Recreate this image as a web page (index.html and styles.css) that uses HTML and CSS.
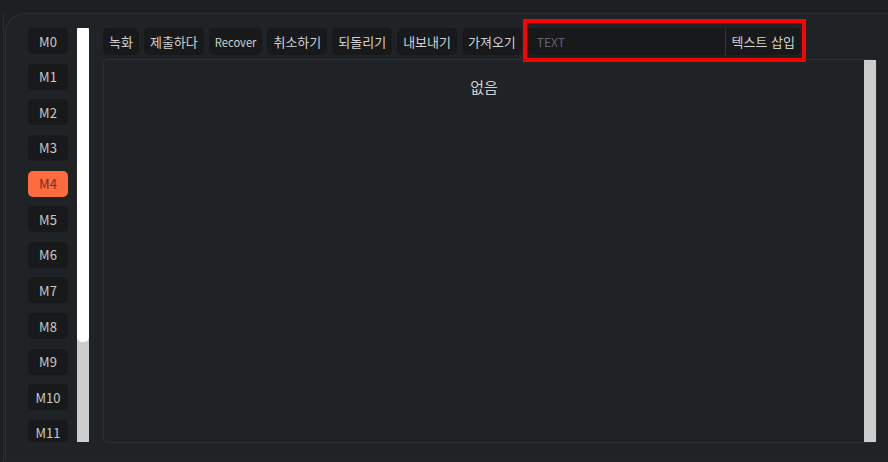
FILE: index.html
```html
<!DOCTYPE html>
<html lang="ko">
<head>
  <meta charset="UTF-8" />
  <meta name="viewport" content="width=device-width, initial-scale=1.0">
  <title>Macro</title>

  <link rel="stylesheet" href="styles.css">
</head>

<body>

  <div class="app">
    <div class="panel">

      <div class="slots">
        <div class="slot-list">
          <button class="slot">M0</button>
          <button class="slot">M1</button>
          <button class="slot">M2</button>
          <button class="slot">M3</button>
          <button class="slot active">M4</button>
          <button class="slot">M5</button>
          <button class="slot">M6</button>
          <button class="slot">M7</button>
          <button class="slot">M8</button>
          <button class="slot">M9</button>
          <button class="slot">M10</button>
          <button class="slot">M11</button>
        </div>
        <!-- scrollbar drawn by hand, the browser hides the real one -->
        <div class="scroll-track">
          <div class="scroll-thumb"></div>
        </div>
      </div>

      <div class="main">
        <div class="toolbar">
          <button class="tool">녹화</button>
          <button class="tool">제출하다</button>
          <button class="tool latin">Recover</button>
          <button class="tool">취소하기</button>
          <button class="tool">되돌리기</button>
          <button class="tool">내보내기</button>
          <button class="tool">가져오기</button>

          <!-- highlighted insert box -->
          <div class="mark">
            <div class="text-group">
              <input type="text" class="text-input" placeholder="TEXT">
              <button class="insert">텍스트 삽입</button>
            </div>
          </div>
        </div>

        <div class="board">
          <div class="board-body">
            <p class="empty">없음</p>
          </div>
          <div class="scroll-track"></div>
        </div>
      </div>

    </div>
  </div>

</body>
</html>
```

FILE: styles.css
```css
body {
  margin: 0;
  padding: 0;
  background-color: #1d2022;
  font-family: "Noto Sans CJK KR", "Noto Sans", sans-serif;
  overflow: hidden;
}

button,
input {
  font-family: inherit;
}

.app {
  height: 462px;
  margin-left: 3px;
  border-left: 1px solid #2a2e30;
}

.panel {
  display: flex;
  height: 448px;
  margin-top: 13px;
  margin-left: 1px;
  padding: 14px 11px 0 22px;
  box-sizing: border-box;
  background-color: #202326;
  border-top: 1px solid #2b2f32;
  border-left: 1px solid #2b2f32;
  border-top-left-radius: 20px;
}

.slots {
  display: flex;
  flex: none;
  height: 414px;
}

.slot-list {
  display: flex;
  flex-direction: column;
  gap: 9.64px;
  width: 49px;
  overflow: hidden;
}

.scroll-track {
  flex: none;
  width: 12px;
  background-color: #cdcdcd;
}

.scroll-thumb {
  height: 314px;
  background-color: #ffffff;
  border-radius: 3px 3px 5px 5px;
}

.slot {
  flex: none;
  width: 40px;
  height: 26px;
  padding: 0;
  border: none;
  border-radius: 5px;
  background-color: #17191b;
  color: #c9c9c9;
  font-size: 13px;
}

.slot.active {
  background-color: #fd6b3e;
  color: #70321f;
}

.main {
  display: flex;
  flex-direction: column;
  gap: 4px;
  flex: 1;
  margin-left: 14px;
}

.toolbar {
  display: flex;
  align-items: flex-start;
  gap: 5px;
  height: 27px;
}

.tool {
  height: 27px;
  padding: 0 6px;
  border: none;
  border-radius: 5px;
  background-color: #17191b;
  color: #d2d2d2;
  font-size: 13px;
  white-space: nowrap;
}

.tool.latin {
  font-size: 11.2px;
}

.mark {
  margin: -9px 0 -7px -4px;
  padding: 5px 1px 3px 0;
  border: 4px solid #ff0000;
}

.text-group {
  display: flex;
  height: 27px;
  border-radius: 5px;
  background-color: #17191b;
}

.text-input {
  width: 199px;
  padding: 0 10px;
  box-sizing: border-box;
  border: none;
  border-right: 1px solid #303437;
  border-radius: 5px 0 0 5px;
  background-color: transparent;
  color: #d2d2d2;
  font-size: 12px;
  outline: none;
}

.text-input::placeholder {
  color: #606467;
}

.insert {
  width: 75px;
  padding: 0;
  border: none;
  background-color: transparent;
  color: #d2d2d2;
  font-size: 13px;
  white-space: nowrap;
}

.board {
  display: flex;
  height: 384px;
  box-sizing: border-box;
  border: 1px solid #2c3033;
  border-radius: 4px;
}

.board-body {
  flex: 1;
}

.empty {
  margin: 0;
  padding-top: 16px;
  text-align: center;
  color: #d0d0d0;
  font-size: 15px;
}
```
